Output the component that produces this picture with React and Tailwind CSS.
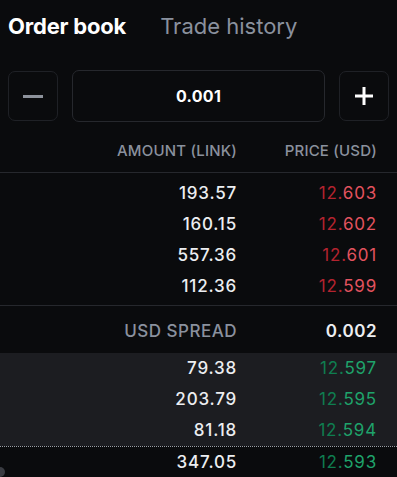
const asks = [
  { amount: '193.57', price: '603' },
  { amount: '160.15', price: '602' },
  { amount: '557.36', price: '601' },
  { amount: '112.36', price: '599' },
];

const bids = [
  { amount: '79.38', price: '597', filled: true },
  { amount: '203.79', price: '595', filled: true },
  { amount: '81.18', price: '594', filled: true },
  { amount: '347.05', price: '593', filled: false },
];

function Row({ amount, price, side, filled }) {
  const dim = side === 'ask' ? 'text-[#b3232f]' : 'text-[#0f7d50]';
  const bright = side === 'ask' ? 'text-[#e3535f]' : 'text-[#1fa36b]';
  return (
    <div className={`flex items-center justify-end h-[31px] pr-[20px] text-[17px] tracking-[0.8px] ${filled ? 'bg-[#1c1d21]' : ''}`}>
      <div className="text-right font-medium text-[#eceef1]">{amount}</div>
      <div className="w-[140px] text-right">
        <span className={dim}>12.</span>
        <span className={bright}>{price}</span>
      </div>
    </div>
  );
}

export default function App() {
  return (
    <div className="relative w-[397px] h-[477px] overflow-hidden bg-[#0a0b0d] font-['Inter',sans-serif]">
      <div className="flex items-center gap-[34px] px-[8px] pt-[10px]">
        <span className="text-[22px] font-bold tracking-[-0.2px] text-white">Order book</span>
        <span className="text-[22px] text-[#8a919e]">Trade history</span>
      </div>

      <div className="flex items-center gap-[14px] px-[8px] mt-[27px]">
        <button className="flex h-[50px] w-[50px] items-center justify-center rounded-[7px] border border-[#1f2126]">
          <span className="block h-[3px] w-[20px] bg-[#8d929b]"></span>
        </button>
        <div className="flex h-[52px] flex-1 items-center justify-center rounded-[7px] border border-[#26282d] text-[16px] font-bold tracking-[0.3px] text-white">
          0.001
        </div>
        <button className="flex h-[50px] w-[50px] items-center justify-center rounded-[7px] border border-[#1f2126]">
          <svg width="20" height="20" viewBox="0 0 20 20">
            <path d="M10 1v18M1 10h18" stroke="#ffffff" strokeWidth="3" />
          </svg>
        </button>
      </div>

      <div className="mt-[9px] flex h-[42px] items-center justify-end border-b border-[#26282d] pr-[20px] text-[15px] font-medium tracking-[0.2px] text-[#8a919e]">
        <div className="text-right">AMOUNT (LINK)</div>
        <div className="w-[140px] text-right">PRICE (USD)</div>
      </div>

      <div className="border-b border-[#26282d] pt-[5px] pb-[3px]">
        {asks.map((r) => (
          <Row key={r.amount} {...r} side="ask" />
        ))}
      </div>

      <div className="flex h-[47px] items-center justify-end pr-[20px] pt-[4px] text-[17px] tracking-[0.5px]">
        <div className="text-right font-medium text-[#8a919e]">USD SPREAD</div>
        <div className="w-[140px] text-right font-semibold text-[#eceef1]">0.002</div>
      </div>

      <div>
        {bids.slice(0, 3).map((r) => (
          <Row key={r.amount} {...r} side="bid" />
        ))}
        <div className="border-t border-dotted border-[#9a9ea6]"></div>
        <Row {...bids[3]} side="bid" />
      </div>

      <div className="absolute left-[-5px] top-[467px] h-[10px] w-[10px] rounded-full bg-[#3a3c42]"></div>
    </div>
  );
}
